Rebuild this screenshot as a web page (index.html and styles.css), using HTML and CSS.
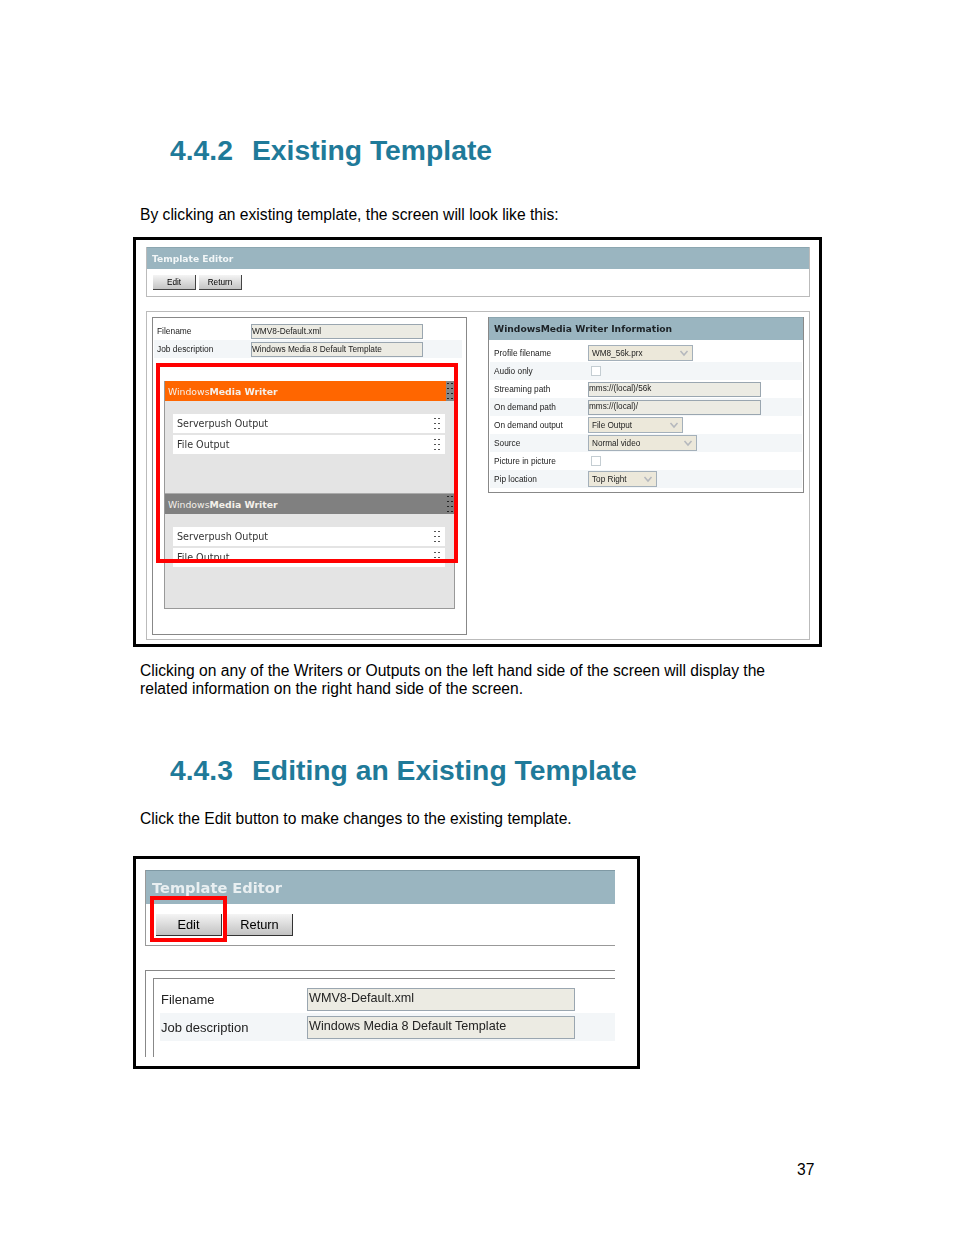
FILE: index.html
```html
<!DOCTYPE html>
<html lang="en">
<head>
  <meta charset="UTF-8" />
  <title>Existing Template</title>
  <link rel="stylesheet" href="styles.css">
</head>
<body>
  <svg width="0" height="0" class="defs">
    <symbol id="chev" viewBox="0 0 10 10"><path d="M1.5 3 L5 7 L8.5 3" fill="none" stroke="#b5b8bd" stroke-width="1.5" /></symbol>
  </svg>

  <h2 class="section-title"><span class="section-num">4.4.2</span>Existing Template</h2>
  <p class="para intro">By clicking an existing template, the screen will look like this:</p>

  <div class="frame frame-large">
    <div class="shot">
      <div class="bar">
        <div class="bar-title">Template Editor</div>
        <div class="bar-buttons">
          <div class="btn">Edit</div>
          <div class="btn">Return</div>
        </div>
      </div>

      <div class="work">
        <div class="left-box">
          <div class="field-row"><span class="field-label">Filename</span><div class="ro-input">WMV8-Default.xml</div></div>
          <div class="field-row shaded"><span class="field-label">Job description</span><div class="ro-input">Windows Media 8 Default Template</div></div>

          <div class="writers">
            <div class="writer">
              <div class="writer-head orange">Windows<b>Media Writer</b><span class="grip"></span></div>
              <div class="output">Serverpush Output<span class="grip small"></span></div>
              <div class="output">File Output<span class="grip small"></span></div>
            </div>
            <div class="writer">
              <div class="writer-head grey">Windows<b>Media Writer</b><span class="grip"></span></div>
              <div class="output">Serverpush Output<span class="grip small"></span></div>
              <div class="output">File Output<span class="grip small"></span></div>
            </div>
          </div>
          <div class="red-box red-writers"></div>
        </div>

        <div class="info-box">
          <div class="info-head">WindowsMedia Writer Information</div>
          <div class="info-row"><span class="info-label">Profile filename</span><div class="sel w105">WM8_56k.prx<svg class="chev"><use href="#chev" /></svg></div></div>
          <div class="info-row shaded"><span class="info-label">Audio only</span><span class="check"></span></div>
          <div class="info-row"><span class="info-label">Streaming path</span><div class="path">mms://(local)/56k</div></div>
          <div class="info-row shaded"><span class="info-label">On demand path</span><div class="path">mms://(local)/</div></div>
          <div class="info-row"><span class="info-label">On demand output</span><div class="sel w95">File Output<svg class="chev"><use href="#chev" /></svg></div></div>
          <div class="info-row shaded"><span class="info-label">Source</span><div class="sel w109">Normal video<svg class="chev"><use href="#chev" /></svg></div></div>
          <div class="info-row"><span class="info-label">Picture in picture</span><span class="check"></span></div>
          <div class="info-row shaded"><span class="info-label">Pip location</span><div class="sel w69">Top Right<svg class="chev"><use href="#chev" /></svg></div></div>
        </div>
      </div>
    </div>
  </div>

  <p class="para after">Clicking on any of the Writers or Outputs on the left hand side of the screen will display the<br>related information on the right hand side of the screen.</p>

  <h2 class="section-title second"><span class="section-num">4.4.3</span>Editing an Existing Template</h2>
  <p class="para intro-two">Click the Edit button to make changes to the existing template.</p>

  <div class="frame frame-small">
    <div class="shot-big">
      <div class="big-bar">
        <div class="big-title">Template Editor</div>
        <div class="big-buttons">
          <div class="big-btn">Edit</div>
          <div class="big-btn">Return</div>
        </div>
      </div>
      <div class="big-work">
        <div class="big-inner">
          <div class="big-row"><span class="big-label">Filename</span><div class="big-input">WMV8-Default.xml</div></div>
          <div class="big-row shaded"><span class="big-label">Job description</span><div class="big-input">Windows Media 8 Default Template</div></div>
        </div>
      </div>
    </div>
    <div class="red-box red-edit"></div>
  </div>

  <div class="page-num">37</div>
</body>
</html>
```

FILE: styles.css
```css
* {
  margin: 0;
  padding: 0;
  box-sizing: border-box;
}

body {
  width: 954px;
  height: 1235px;
  padding-top: 134px;
  background: #fff;
  color: #000;
  font-family: "Liberation Sans", Arial, sans-serif;
  overflow: hidden;
}

.defs {
  position: absolute;
}

.section-title {
  display: flex;
  margin-left: 170px;
  font-size: 28.3px;
  line-height: 32px;
  font-weight: bold;
  color: #1f7a99;
}

.section-num {
  width: 82px;
}

.section-title.second {
  margin-top: 56px;
}

.para {
  margin-left: 140px;
  font-size: 15.63px;
  line-height: 18px;
}

.intro {
  margin-top: 40px;
  margin-bottom: 13px;
}

.after {
  margin-top: 15px;
}

.intro-two {
  margin-top: 24px;
  margin-bottom: 28px;
}

.frame {
  margin-left: 133px;
  border: 3px solid #000;
  background: #fff;
  position: relative;
}

.frame-large {
  width: 689px;
  height: 410px;
  padding: 7px 0 0 10px;
}

.frame-small {
  width: 507px;
  height: 213px;
  padding: 11px 0 0 9px;
  overflow: hidden;
}

/* first screenshot */
.shot {
  width: 664px;
  filter: blur(0.35px);
}

.bar {
  height: 50px;
  border: 1px solid #bbb;
  border-top: 0;
}

.bar-title {
  height: 22px;
  padding-left: 5px;
  background: #9ab5c0;
  border-top: 1px solid #8ca6b0;
  color: #f2f6f7;
  font: bold 9.15px/22px "DejaVu Sans", sans-serif;
}

.bar-buttons {
  display: flex;
  gap: 3px;
  padding: 6px 0 0 6px;
}

.btn {
  width: 43px;
  height: 15px;
  background: linear-gradient(#f4f4f4, #c4c4c4);
  border-right: 1px solid #444;
  border-bottom: 1px solid #444;
  text-align: center;
  font-size: 8.2px;
  line-height: 15px;
}

.work {
  display: flex;
  gap: 21px;
  align-items: flex-start;
  height: 329px;
  margin-top: 14px;
  padding: 5px;
  border: 1px solid #bbb;
}

.left-box {
  position: relative;
  width: 315px;
  height: 318px;
  padding: 4px 4px 0 1px;
  border: 1px solid #888;
}

.field-row {
  display: flex;
  align-items: center;
  height: 18px;
  padding-left: 3px;
}

.shaded {
  background: #f3f6f8;
}

.field-label {
  width: 94px;
  font-size: 8.4px;
  color: #222;
}

.ro-input {
  width: 172px;
  height: 15px;
  background: #ecebe3;
  border: 1px solid #9aa6b0;
  font-size: 8.3px;
  line-height: 12px;
  white-space: nowrap;
  color: #222;
}

.writers {
  width: 291px;
  height: 228px;
  margin: 23px 0 0 10px;
  background: #e4e4e4;
  border: 1px solid #999;
  border-top: 0;
}

.writer {
  height: 112px;
}

.writer-head {
  position: relative;
  height: 20px;
  padding-left: 3px;
  color: #f4f0ea;
  font: 9.3px/21px "DejaVu Sans", sans-serif;
}

.writer-head b {
  font-weight: bold;
}

.orange {
  background: #ff6600;
}

.grey {
  height: 21px;
  background: #808080;
  border-top: 1px solid #aaa;
}

.grip {
  position: absolute;
  right: 0;
  top: 0;
  width: 8px;
  height: 100%;
  background: radial-gradient(circle, #222 0.8px, transparent 1.1px) 0 0 / 4px 5px;
}

.orange .grip {
  background-color: #888;
}

.grip.small {
  right: 4px;
  top: 2px;
  height: 15px;
  background-image: radial-gradient(circle, #555 0.6px, transparent 0.9px);
}

.output {
  position: relative;
  width: 272px;
  height: 19px;
  margin: 2px 0 0 8px;
  padding-left: 4px;
  background: #fff;
  color: #333;
  font: 9.6px/19px "DejaVu Sans", sans-serif;
}

.writer-head + .output {
  margin-top: 13px;
}

.info-box {
  width: 316px;
  height: 176px;
  padding: 0 1px;
  border: 1px solid #888;
  border-top: 0;
}

.info-head {
  height: 23px;
  margin: 0 -1px 4px;
  padding-left: 5px;
  background: #9ab5c0;
  border-top: 1px solid #8ca6b0;
  color: #1c2226;
  font: bold 9.2px/21px "DejaVu Sans", sans-serif;
}

.info-row {
  display: flex;
  align-items: center;
  height: 18px;
  padding-left: 4px;
}

.info-label {
  width: 94px;
  font-size: 8.3px;
  color: #222;
}

.sel {
  display: flex;
  align-items: center;
  justify-content: space-between;
  height: 16px;
  padding-left: 3px;
  background: #ece8da;
  border: 1px solid #a4b0ba;
  font-size: 8.2px;
  color: #222;
}

.chev {
  width: 10px;
  height: 10px;
  margin-right: 3px;
}

.w105 { width: 105px; }
.w95 { width: 95px; }
.w109 { width: 109px; }
.w69 { width: 69px; }

.path {
  width: 173px;
  height: 15px;
  background: #ecebe3;
  border: 1px solid #9aa6b0;
  font-size: 8.2px;
  line-height: 11px;
  color: #222;
}

.check {
  width: 10px;
  height: 10px;
  margin-left: 3px;
  background: #fff;
  border: 1px solid #c4cdd2;
}

/* red markers over the screenshots */
.red-box {
  position: absolute;
  border: 4px solid #ff0000;
}

.red-writers {
  left: 3px;
  top: 45px;
  width: 302px;
  height: 200px;
}

.red-edit {
  left: 14px;
  top: 37px;
  width: 77px;
  height: 46px;
}

/* second screenshot */
.shot-big {
  width: 470px;
  filter: blur(0.45px);
}

.big-bar {
  height: 76px;
  border-left: 1px solid #999;
  border-bottom: 1px solid #999;
}

.big-title {
  height: 34px;
  padding-left: 6px;
  background: #9ab5c0;
  border-top: 1px solid #7f99a4;
  color: #e9eff1;
  font: bold 14.6px/33px "DejaVu Sans", sans-serif;
}

.big-buttons {
  display: flex;
  gap: 5px;
  padding: 10px 0 0 10px;
}

.big-btn {
  width: 66px;
  height: 22px;
  background: linear-gradient(#f4f4f4, #c2c2c2);
  border-right: 1px solid #333;
  border-bottom: 1px solid #333;
  text-align: center;
  font-size: 12.8px;
  line-height: 21px;
}

.big-work {
  height: 87px;
  margin-top: 24px;
  padding: 7px 0 0 7px;
  border-top: 1px solid #888;
  border-left: 1px solid #888;
}

.big-inner {
  height: 79px;
  padding: 6px 0 0 6px;
  border-top: 1px solid #888;
  border-left: 1px solid #888;
}

.big-row {
  display: flex;
  align-items: center;
  height: 28px;
  padding-left: 1px;
}

.big-label {
  width: 146px;
  font-size: 13px;
  color: #222;
}

.big-input {
  width: 268px;
  height: 23px;
  padding-left: 1px;
  background: #ecebe3;
  border: 1px solid #9aa6b0;
  font-size: 12.6px;
  line-height: 19px;
  white-space: nowrap;
  color: #222;
}

.page-num {
  margin: 92px 0 0 797px;
  font-size: 15.63px;
  line-height: 18px;
}
```
